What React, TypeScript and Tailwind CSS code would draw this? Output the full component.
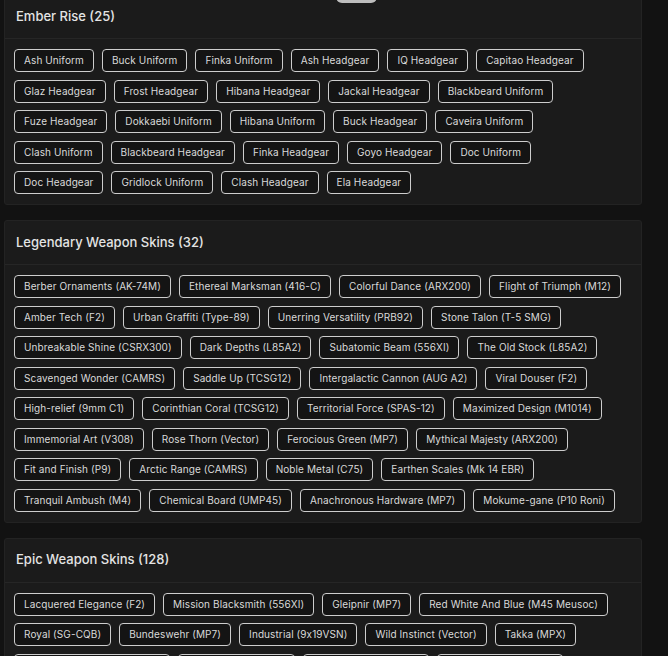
import React from 'react';

type Section = {
  title: string;
  count: number;
  items: string[];
};

const sections: Section[] = [
  {
    title: 'Ember Rise',
    count: 25,
    items: [
      'Ash Uniform', 'Buck Uniform', 'Finka Uniform', 'Ash Headgear', 'IQ Headgear', 'Capitao Headgear',
      'Glaz Headgear', 'Frost Headgear', 'Hibana Headgear', 'Jackal Headgear', 'Blackbeard Uniform',
      'Fuze Headgear', 'Dokkaebi Uniform', 'Hibana Uniform', 'Buck Headgear', 'Caveira Uniform',
      'Clash Uniform', 'Blackbeard Headgear', 'Finka Headgear', 'Goyo Headgear', 'Doc Uniform',
      'Doc Headgear', 'Gridlock Uniform', 'Clash Headgear', 'Ela Headgear',
    ],
  },
  {
    title: 'Legendary Weapon Skins',
    count: 32,
    items: [
      'Berber Ornaments (AK-74M)', 'Ethereal Marksman (416-C)', 'Colorful Dance (ARX200)', 'Flight of Triumph (M12)',
      'Amber Tech (F2)', 'Urban Graffiti (Type-89)', 'Unerring Versatility (PRB92)', 'Stone Talon (T-5 SMG)',
      'Unbreakable Shine (CSRX300)', 'Dark Depths (L85A2)', 'Subatomic Beam (556XI)', 'The Old Stock (L85A2)',
      'Scavenged Wonder (CAMRS)', 'Saddle Up (TCSG12)', 'Intergalactic Cannon (AUG A2)', 'Viral Douser (F2)',
      'High-relief (9mm C1)', 'Corinthian Coral (TCSG12)', 'Territorial Force (SPAS-12)', 'Maximized Design (M1014)',
      'Immemorial Art (V308)', 'Rose Thorn (Vector)', 'Ferocious Green (MP7)', 'Mythical Majesty (ARX200)',
      'Fit and Finish (P9)', 'Arctic Range (CAMRS)', 'Noble Metal (C75)', 'Earthen Scales (Mk 14 EBR)',
      'Tranquil Ambush (M4)', 'Chemical Board (UMP45)', 'Anachronous Hardware (MP7)', 'Mokume-gane (P10 Roni)',
    ],
  },
  {
    title: 'Epic Weapon Skins',
    count: 128,
    items: [
      'Lacquered Elegance (F2)', 'Mission Blacksmith (556XI)', 'Gleipnir (MP7)', 'Red White And Blue (M45 Meusoc)',
      'Royal (SG-CQB)', 'Bundeswehr (MP7)', 'Industrial (9x19VSN)', 'Wild Instinct (Vector)', 'Takka (MPX)',
      'Frozen Grain (Commando 9)', 'Night Shift (SMG-11)', 'Scorched Iron (G36C)', 'Coral Blossom (AR33)',
    ],
  },
];

const Chip = ({ label }: { label: string }) => (
  <span className="h-[23px] flex items-center px-[9px] rounded-[4px] border-[1.5px] border-[#cdcdcd] bg-[#141414] text-[10px] text-[#dadada] whitespace-nowrap tracking-[0.1px]">
    {label}
  </span>
);

const SectionCard = ({ section }: { section: Section }) => (
  <div className="w-[638px] bg-[#1b1b1b] border border-[#232323] rounded-[3px]">
    <div className="h-[44px] flex items-center px-[11px] border-b border-[#262626]">
      <h3 className="text-[13px] font-medium text-[#e4e4e4]">
        {section.title} ({section.count})
      </h3>
    </div>
    <div className="flex flex-wrap gap-x-[8px] gap-y-[7.5px] pl-[9px] pr-[17px] pt-[10px] pb-[10px]">
      {section.items.map((item) => (
        <Chip key={item} label={item} />
      ))}
    </div>
  </div>
);

export default function App() {
  return (
    <div
      className="relative h-[656px] overflow-hidden bg-[#121212]"
      style={{ fontFamily: 'Inter, "Open Sans", sans-serif' }}
    >
      {/* edge of the floating button above the list */}
      <div className="absolute top-[-20px] left-[336px] w-[41px] h-[23px] rounded-md bg-[#bdbdbd]" />
      <div className="flex flex-col gap-[15px] pl-[4px] mt-[-6px]">
        {sections.map((section) => (
          <SectionCard key={section.title} section={section} />
        ))}
      </div>
    </div>
  );
}
